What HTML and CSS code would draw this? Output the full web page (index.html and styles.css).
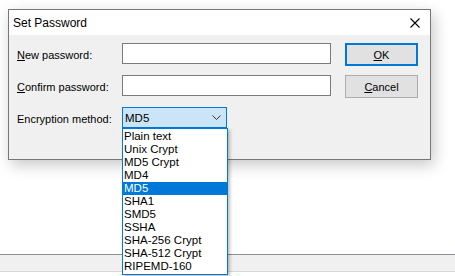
FILE: index.html
```html
<!DOCTYPE html>
<html>
<head>
	<meta charset="utf-8">
	<meta name="viewport" content="width=device-width, initial-scale=1">
	<title>Set Password</title>

	<link rel="stylesheet" href="styles.css">
</head>
<body>

	<div class="desk">
		<div class="dialog">
			<div class="titlebar">
				<span class="title">Set Password</span>
				<span class="close">
					<svg width="10" height="10" viewBox="0 0 10 10"><path d="M0.5 0.5L9.5 9.5M9.5 0.5L0.5 9.5" stroke="#000" stroke-width="1.1" fill="none"/></svg>
				</span>
			</div>
			<div class="body">
				<label class="lbl"><u>N</u>ew password:</label>
				<input class="field" type="password">
				<button class="btn default"><u>O</u>K</button>

				<label class="lbl"><u>C</u>onfirm password:</label>
				<input class="field" type="password">
				<button class="btn"><u>C</u>ancel</button>

				<label class="lbl">Encryption method:</label>
				<div class="combo-wrap">
					<div class="combo">
						<span>MD5</span>
						<svg width="9" height="5" viewBox="0 0 9 5"><path d="M0.5 0.5L4.5 4.5L8.5 0.5" stroke="#333" stroke-width="1" fill="none"/></svg>
					</div>
					<ul class="list">
						<li>Plain text</li>
						<li>Unix Crypt</li>
						<li>MD5 Crypt</li>
						<li>MD4</li>
						<li class="sel">MD5</li>
						<li>SHA1</li>
						<li>SMD5</li>
						<li>SSHA</li>
						<li>SHA-256 Crypt</li>
						<li>SHA-512 Crypt</li>
						<li>RIPEMD-160</li>
					</ul>
				</div>
			</div>
		</div>

		<div class="statusbar"></div>
	</div>

</body>
</html>
```

FILE: styles.css
```css
*{
	margin: 0;
	padding: 0;
	box-sizing: border-box;
}
body{
	background: #fff;
	font-family: "Liberation Sans", Arial, sans-serif;
	font-size: 11px;
	color: #000;
	overflow: hidden;
}
.desk{
	height: 276px;
	padding-top: 9px;
	display: flex;
	flex-direction: column;
}
.dialog{
	margin-left: 8px;
	width: 423px;
	height: 151px;
	border: 1px solid #777;
	background: #f0f0f0;
	box-shadow: 3px 5px 14px rgba(0,0,0,0.22);
	position: relative;
	z-index: 2;
}
.titlebar{
	height: 25px;
	background: #fff;
	display: flex;
	align-items: center;
	justify-content: space-between;
	padding: 0 10px 0 4px;
}
.title{
	font-size: 12px;
	padding-top: 1px;
}
.close{
	display: flex;
	padding-top: 1px;
}
.body{
	display: grid;
	grid-template-columns: 91px 209px 73px;
	grid-auto-rows: 23px;
	column-gap: 14px;
	row-gap: 9px;
	padding: 8px 0 0 8px;
	align-items: start;
}
.lbl{
	align-self: center;
	white-space: nowrap;
}
.field{
	height: 21px;
	border: 1px solid #7a7a7a;
	background: #fff;
	outline: none;
}
.btn{
	height: 23px;
	border: 1px solid #adadad;
	background: #e1e1e1;
	font-family: inherit;
	font-size: 11px;
	color: #000;
}
.btn.default{
	border: 2px solid #0078d7;
}
.combo-wrap{
	width: 105px;
	position: relative;
}
.combo{
	height: 21px;
	border: 1px solid #0078d7;
	background: #cce4f7;
	display: flex;
	align-items: center;
	justify-content: space-between;
	padding: 0 5px 0 2px;
	font-size: 11.5px;
}
.list{
	position: absolute;
	top: 21px;
	left: 0;
	width: 106px;
	list-style: none;
	background: #fff;
	border: 1px solid #0078d7;
	padding: 1px 0;
	box-shadow: 2px 2px 3px rgba(0,0,0,0.25);
	font-size: 11.5px;
}
.list li{
	height: 13px;
	line-height: 13px;
	padding-left: 1px;
}
.list li.sel{
	background: #0078d7;
	color: #fff;
}
.statusbar{
	margin-top: auto;
	margin-bottom: 4px;
	height: 18px;
	border-top: 1px solid #8e8e99;
	border-bottom: 1px solid #d8d8d8;
	background: #f0f0f0;
}
```
